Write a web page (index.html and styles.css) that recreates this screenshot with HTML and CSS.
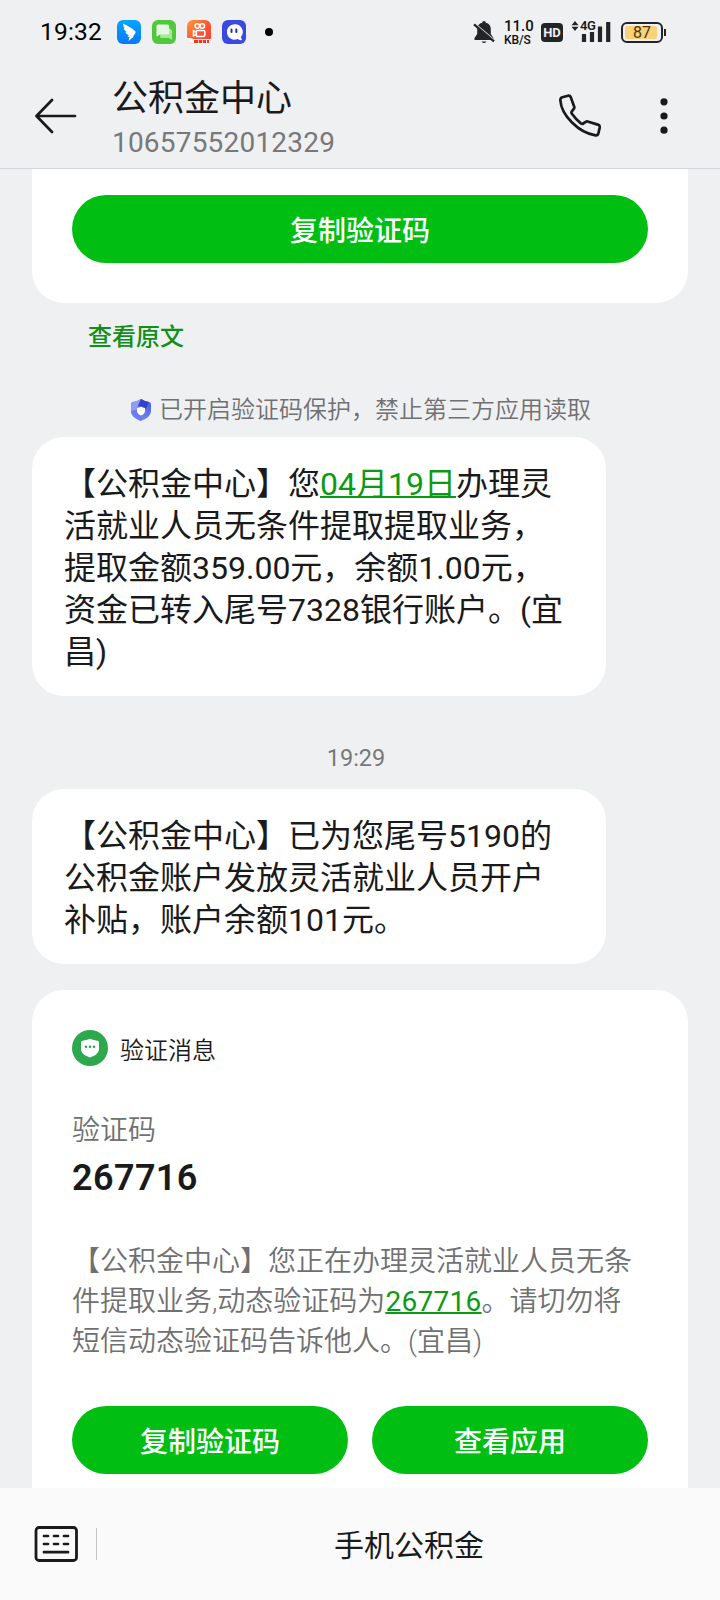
FILE: index.html
```html
<!DOCTYPE html>
<html lang="zh-CN">
<head>
<meta charset="utf-8">
<title>公积金中心</title>
<link rel="stylesheet" href="styles.css">
</head>
<body>
<div class="phone">
  <div class="status">
    <span class="clock">19:32</span>
    <div class="apps">
      <svg class="app" viewBox="0 0 24 24"><defs><linearGradient id="a1" x1="0" y1="0" x2="0" y2="1"><stop offset="0" stop-color="#05a6ff"/><stop offset="1" stop-color="#0878f8"/></linearGradient></defs><rect width="24" height="24" rx="6" fill="url(#a1)"/><path d="M6 3.500C10 5.500 15 8 18 11c1 1 .6 2-.2 3l-2 2.500H17L11.500 21l1-4.300H10.500l1.300-1.800C9.500 14.600 8.700 13 8.600 12l1.400.2C7.600 10.500 6.800 9 6.900 7.900L8 8.300C6.500 6.800 5.800 5 6 3.500z" fill="#fff"/></svg>
      <svg class="app" viewBox="0 0 24 24"><rect width="24" height="24" rx="6" fill="#50c83c"/><path d="M9 9h9q2 0 2 2v9l-3-2H9q-1 0-1-2z" fill="#a8e69e"/><path d="M6 4.500h9.500q1.700 0 1.700 1.700V13q0 1.500-1.700 1.500H8l-3.500 2.200V6.200Q4.500 4.500 6 4.500z" fill="#e4f7e0"/></svg>
      <svg class="app" viewBox="0 0 24 24"><defs><linearGradient id="a3" x1="0" y1="0" x2="1" y2="1"><stop offset="0" stop-color="#ff9a3c"/><stop offset=".5" stop-color="#fb5a32"/><stop offset="1" stop-color="#f83a3a"/></linearGradient></defs><rect width="24" height="24" rx="6" fill="url(#a3)"/><g fill="none" stroke="#fff" stroke-width="1.600"><circle cx="10.300" cy="6" r="2.200"/><circle cx="15.300" cy="6" r="2.200"/><rect x="9.300" y="10.500" width="8.500" height="6" rx="1.500"/><path d="M9 12l-2.500-1.200v5L9 14.700"/></g><path d="M0 18h4l2 1h18v1q-1 4-6 4H6q-5 0-6-5z" fill="#fff3ee"/><path d="M7 21.500h4M11.700 21.500h3.500M16 21.500h3M20 21.500h2" stroke="#e83a24" stroke-width="3"/></svg>
      <svg class="app" viewBox="0 0 24 24"><rect width="24" height="24" rx="6" fill="#3a4ae0"/><path d="M12.500 4.200a7.700 7.700 0 1 0 3 14.800q2 1.500 4.500 1l-1.200-3a7.700 7.700 0 0 0-6.300-12.800z" fill="#fff"/><path d="M9.500 9.500v2.500M14.300 9.500v2.500" stroke="#2434a8" stroke-width="2" stroke-linecap="round"/></svg>
      <i class="more-dot"></i>
    </div>
    <svg class="bell" viewBox="0 0 22 24"><path d="M11 1a1.800 1.800 0 0 1 1.800 1.800c3.200.7 5 3 5 6.200v5l2.700 4v2H1.500v-2L4.200 14V9c0-3.200 1.800-5.500 5-6.200A1.800 1.800 0 0 1 11 1zM8.500 21.500h5q-2.500 3-5 0z" fill="#222427"/><path d="M0 2.700l22 18.600" stroke="#eff0f2" stroke-width="2.500"/><path d="M1 4.300l20 17" stroke="#222427" stroke-width="2.400"/></svg>
    <div class="rate"><span>11.0</span><span class="unit">KB/S</span></div>
    <span class="hd">HD</span>
    <div class="signal">
      <svg viewBox="0 0 40 22"><path d="M4 0l3.500 4.200H.5zM4 10L.5 5.800h7z" fill="#222427"/><path d="M13 21v-8M21 21V11M29 21V5.500M37.200 21V1" stroke="#222427" stroke-width="4.200"/></svg>
      <span class="net">4G</span>
    </div>
    <div class="battery"><span class="level">87</span></div>
  </div>

  <header class="header">
    <svg class="back" viewBox="0 0 42 36"><path d="M40 18H2M17 2L1.500 18 17 34" fill="none" stroke="#1a1a1c" stroke-width="2.700" stroke-linecap="round" stroke-linejoin="round"/></svg>
    <div class="who"><h1 class="name">公积金中心</h1><span class="number">10657552012329</span></div>
    <svg class="call" viewBox="0 0 44 44"><path d="M5.300 3.200l5.700-1.500q2-.4 2.700 1.400l3.500 9.600q.4 1.300-.4 2.200l-2 2.500q-.8 1.200.1 2.400 4.500 6.300 9 9.600 1.200.8 2.300.1l2.600-1.700q.8-.6 1.800-.3l10.200 3.100q2.300.9 1.900 3l-1.300 5.600q-.6 2.400-2.900 2.100Q26 39.500 15 28.500T3.400 6.500q-.2-2.700 1.900-3.300z" fill="none" stroke="#1a1a1c" stroke-width="2.700" stroke-linejoin="round"/></svg>
    <svg class="dots" viewBox="0 0 8 36"><g fill="#1a1a1c"><circle cx="4" cy="3.800" r="3.600"/><circle cx="4" cy="18" r="3.600"/><circle cx="4" cy="32.200" r="3.600"/></g></svg>
  </header>

  <main class="thread">
    <section class="card card-top"><div class="btn">复制验证码</div></section>
    <a class="original">查看原文</a>
    <div class="notice">
      <svg class="shield" viewBox="0 0 20 22"><defs><linearGradient id="s" x1="1" y1="0" x2="0" y2="1"><stop offset="0" stop-color="#4a5ad8"/><stop offset="1" stop-color="#8a98f8"/></linearGradient></defs><path d="M10 0q4 2.500 8 3 2 .4 2 2v7q0 6-10 10Q0 18 0 12V5q0-1.600 2-2 4-.5 8-3z" fill="url(#s)"/><path d="M0 5q0-1.600 2-2Q6 2.500 10 0L7 7l-2 4-5 1z" fill="#8f9cf5"/><path d="M10 0q4 2.500 8 3l-3 7-8-3z" fill="#3443cc"/><path d="M0 12l5-1 6 6-1 5Q0 18 0 12z" fill="#6c7af4"/><path d="M10 7.500q2 1.200 4 1.400v3q0 2.800-4 4.600-4-1.800-4-4.600v-3q2-.2 4-1.400z" fill="#fff"/></svg>
      <span>已开启验证码保护，禁止第三方应用读取</span>
    </div>
    <article class="bubble">【公积金中心】您<u class="link">04月19日</u>办理灵<br>活就业人员无条件提取提取业务，<br>提取金额359.00元，余额1.00元，<br>资金已转入尾号7328银行账户。(宜<br>昌)</article>
    <time class="time">19:29</time>
    <article class="bubble bubble-second">【公积金中心】已为您尾号5190的<br>公积金账户发放灵活就业人员开户<br>补贴，账户余额101元。</article>
    <section class="card card-code">
      <div class="kind">
        <svg class="badge" viewBox="0 0 36 36"><circle cx="18" cy="18" r="18" fill="#2ea84d"/><path d="M18 8.700q4 1.500 7.500 2 1.500.3 1.500 1.800v6.500c0 4-4 7-9 8.500-5-1.500-9-4.500-9-8.500v-6.500q0-1.500 1.500-1.800 3.500-.5 7.500-2z" fill="#fff"/><g fill="#2ea84d"><circle cx="14" cy="16.800" r="1.300"/><circle cx="18" cy="16.800" r="1.300"/><circle cx="22" cy="16.800" r="1.300"/></g></svg>
        <span>验证消息</span>
      </div>
      <div class="label">验证码</div>
      <div class="code">267716</div>
      <p class="detail">【公积金中心】您正在办理灵活就业人员无条<br>件提取业务,动态验证码为<u class="link link-code">267716</u>。请切勿将<br>短信动态验证码告诉他人。(宜昌)</p>
      <div class="actions"><div class="btn">复制验证码</div><div class="btn">查看应用</div></div>
    </section>
  </main>

  <footer class="footer">
    <svg class="keyboard" viewBox="0 0 44 36"><rect x="2" y="1.500" width="40.500" height="33" rx="3" fill="none" stroke="#1a1a1c" stroke-width="2.800"/><path d="M10 10h4M20 10h4M30 10h4M10 18h4M20 18h4M30 18h4M10 26.200h24" stroke="#1a1a1c" stroke-width="2.700" stroke-linecap="round"/></svg>
    <i class="rule"></i>
    <span class="menu">手机公积金</span>
  </footer>
</div>
</body>
</html>
```
FILE: styles.css
```css
* { box-sizing: border-box; }
body {
  margin: 0;
  font-family: Roboto, "Noto Sans CJK SC", sans-serif;
  font-weight: 400;
  color: #1a1a1c;
  text-spacing-trim: space-all;
}
svg { display: block; flex: none; }
.phone {
  width: 720px;
  height: 1600px;
  display: flex;
  flex-direction: column;
  overflow: hidden;
  background: #eff0f2;
}

.status {
  flex: none;
  height: 64px;
  display: flex;
  align-items: center;
  padding-left: 40px;
}
.clock { width: 77px; font-size: 24.500px; font-weight: 450; line-height: 30px; letter-spacing: 0.200px; color: #000; }
.apps { display: flex; align-items: center; gap: 11px; width: 356px; }
.app { width: 24px; height: 24px; }
.more-dot { width: 8px; height: 8px; margin-left: 8px; border-radius: 50%; background: #000; }
.bell { width: 22px; height: 24px; }
.rate {
  width: 28px;
  margin-left: 9px;
  display: flex;
  flex-direction: column;
  font: 500 15px/15px Roboto, sans-serif;
  color: #111;
  white-space: nowrap;
}
.rate .unit { font-size: 12px; line-height: 12px; letter-spacing: -0.100px; }
.hd {
  width: 22px;
  height: 19px;
  margin-left: 9px;
  margin-top: 1px;
  border-radius: 4px;
  background: #222427;
  color: #eff0f2;
  font: 700 13px/19px Roboto, sans-serif;
  text-align: center;
}
.signal { position: relative; width: 40px; height: 22px; margin-left: 8px; }
.signal svg { width: 40px; height: 22px; }
.net {
  position: absolute;
  left: 8px;
  top: -2px;
  padding: 0 1px;
  background: #eff0f2;
  font: 600 13px/13px Roboto, sans-serif;
  letter-spacing: -0.500px;
}
.battery {
  position: relative;
  width: 42px;
  height: 21px;
  margin-left: 10px;
  padding: 2px;
  border: 2px solid #222427;
  border-radius: 6px;
}
.battery::after {
  content: "";
  position: absolute;
  right: -5px;
  top: 5px;
  width: 2px;
  height: 7px;
  background: #222427;
}
.level {
  display: block;
  width: 32px;
  height: 13px;
  border-radius: 2px;
  background: #fbd27a;
  color: #4a3508;
  font-size: 16px;
  font-weight: 400;
  line-height: 14px;
  text-align: center;
  padding-left: 2px;
}

.header {
  flex: none;
  height: 105px;
  display: flex;
  border-bottom: 1px solid #d3d5d8;
}
.back { width: 42px; height: 36px; margin: 34px 0 0 35px; }
.who { width: 444px; margin-left: 36px; }
.name { margin: 9px 0 0 -1px; font-size: 36px; font-weight: 400; line-height: 52px; }
.number { display: block; margin: 1px 0 0 -1px; font-size: 28px; line-height: 34px; letter-spacing: 0.200px; color: #77787a; }
.call { width: 44px; height: 44px; margin-top: 30px; }
.dots { width: 8px; height: 36px; margin: 34px 0 0 59px; }

.thread {
  flex: none;
  height: 1319px;
  display: flex;
  flex-direction: column;
  align-items: flex-start;
  padding: 0 32px;
  overflow: hidden;
}
.card { flex: none; width: 656px; padding: 0 40px; background: #fff; }
.card-top { height: 134px; padding-top: 26px; border-radius: 0 0 32px 32px; }
.btn {
  flex: 1;
  height: 68px;
  border-radius: 34px;
  background: #00bf12;
  color: #fff;
  font-size: 28px;
  font-weight: 500;
  line-height: 73px;
  text-align: center;
}
.original {
  flex: none;
  margin: 16px 0 0 56px;
  font-size: 24px;
  font-weight: 500;
  line-height: 36px;
  color: #109018;
}
.notice {
  flex: none;
  display: flex;
  align-items: center;
  gap: 8px;
  height: 36px;
  margin: 37px 0 0 99px;
  font-size: 24px;
  line-height: 36px;
  font-weight: 350;
  color: #6f7072;
  white-space: nowrap;
}
.shield { width: 20px; height: 22px; }
.bubble {
  flex: none;
  width: 574px;
  height: 259px;
  margin-top: 9px;
  padding: 26px 0 0 32px;
  border-radius: 32px;
  background: #fff;
  font-size: 32px;
  line-height: 42px;
  white-space: nowrap;
}
.link { color: #0c9a14; text-decoration-thickness: 2px; }
.link-code { letter-spacing: 0.300px; }
.time {
  flex: none;
  width: 648px;
  margin-top: 44px;
  font-size: 23.500px;
  line-height: 36px;
  text-align: center;
  color: #77787a;
}
.bubble-second { height: 175px; margin-top: 13px; }
.card-code { height: 560px; margin-top: 26px; padding-top: 40px; border-radius: 32px 32px 0 0; }
.kind { display: flex; align-items: center; gap: 12px; height: 36px; font-size: 24px; font-weight: 350; }
.badge { width: 36px; height: 36px; }
.label { margin-top: 45px; font-size: 28px; font-weight: 350; line-height: 40px; color: #6f7072; }
.code { margin-top: 5px; font-size: 36px; font-weight: 600; line-height: 44px; letter-spacing: 0.400px; }
.detail { margin: 42px 0 0; font-size: 28px; font-weight: 350; line-height: 40px; color: #6f7072; white-space: nowrap; }
.detail .link { font-weight: 400; }
.actions { display: flex; gap: 24px; margin-top: 44px; }

.footer {
  flex: none;
  height: 112px;
  display: flex;
  align-items: center;
  padding-left: 34px;
  background: #fafafa;
}
.keyboard { width: 44px; height: 36px; }
.rule { width: 1px; height: 32px; margin-left: 18px; background: #c4c4c6; }
.menu { flex: 1; font-size: 30px; font-weight: 400; line-height: 44px; padding: 3px 0 0 1px; text-align: center; }
```
